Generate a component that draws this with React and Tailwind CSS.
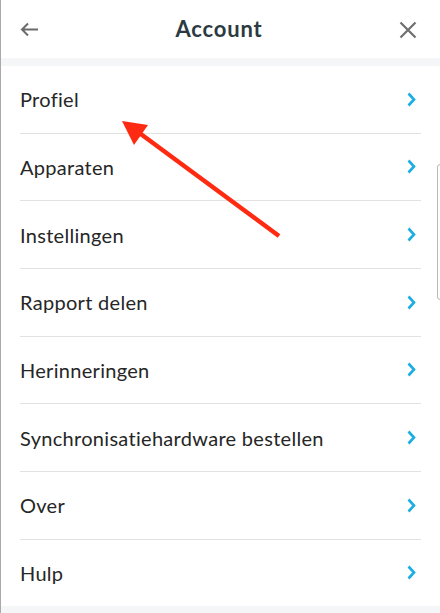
const items = [
  "Profiel",
  "Apparaten",
  "Instellingen",
  "Rapport delen",
  "Herinneringen",
  "Synchronisatiehardware bestellen",
  "Over",
  "Hulp",
];

const Chevron = () => (
  <svg width="9" height="15" viewBox="0 0 9 15" fill="none">
    <path d="M1.5 1.5 L7 7.5 L1.5 13.5" stroke="#1aaee3" strokeWidth="2.6" />
  </svg>
);

const App = () => {
  return (
    <div
      className="relative w-[440px] h-[613px] bg-[#f5f6f8] overflow-hidden border-l border-[#a9a9a9] [font-variant-ligatures:none]"
      style={{ fontFamily: "Lato, 'Open Sans', sans-serif" }}
    >
      {/* Header */}
      <div className="h-[58px] bg-white flex items-center justify-between pl-[19px] pr-[23px] pt-[1px]">
        <svg width="19" height="15" viewBox="0 0 19 15" fill="none">
          <path d="M18 7.5 H2 M8 1.5 L2 7.5 L8 13.5" stroke="#6b6b6b" strokeWidth="2" />
        </svg>
        <h1 className="text-[22px] font-bold text-[#2c3a41] tracking-[0.8px] -mt-[3px]">Account</h1>
        <svg width="18" height="18" viewBox="0 0 18 18" fill="none">
          <path d="M1.5 1.5 L16.5 16.5 M16.5 1.5 L1.5 16.5" stroke="#6f6f6f" strokeWidth="2.2" />
        </svg>
      </div>

      {/* Menu */}
      <div className="mt-[8px] bg-white">
        {items.map((item, i) => (
          <div key={item} className="px-[19px]">
            <div
              className={`flex items-center justify-between pr-[5px] ${
                i < items.length - 1 ? "border-b border-[#e2e2e2]" : ""
              }`}
              style={{ height: i < items.length - 1 ? 67.67 : 66.67 }}
            >
              <span className="text-[20px] text-[#262626] tracking-[0.3px]">{item}</span>
              <Chevron />
            </div>
          </div>
        ))}
      </div>

      {/* scroll thumb */}
      <div className="absolute left-[436px] top-[164px] w-[10px] h-[136px] rounded-[3px] border border-[#b9b9b9] bg-white" />

      {/* red annotation arrow */}
      <svg className="absolute left-0 top-0 pointer-events-none" width="440" height="613">
        <line x1="278" y1="236" x2="133" y2="129" stroke="#ff2a12" strokeWidth="4.5" />
        <polygon points="121,121 147,125 133,145" fill="#ff2a12" />
      </svg>
    </div>
  );
};

export default App;
